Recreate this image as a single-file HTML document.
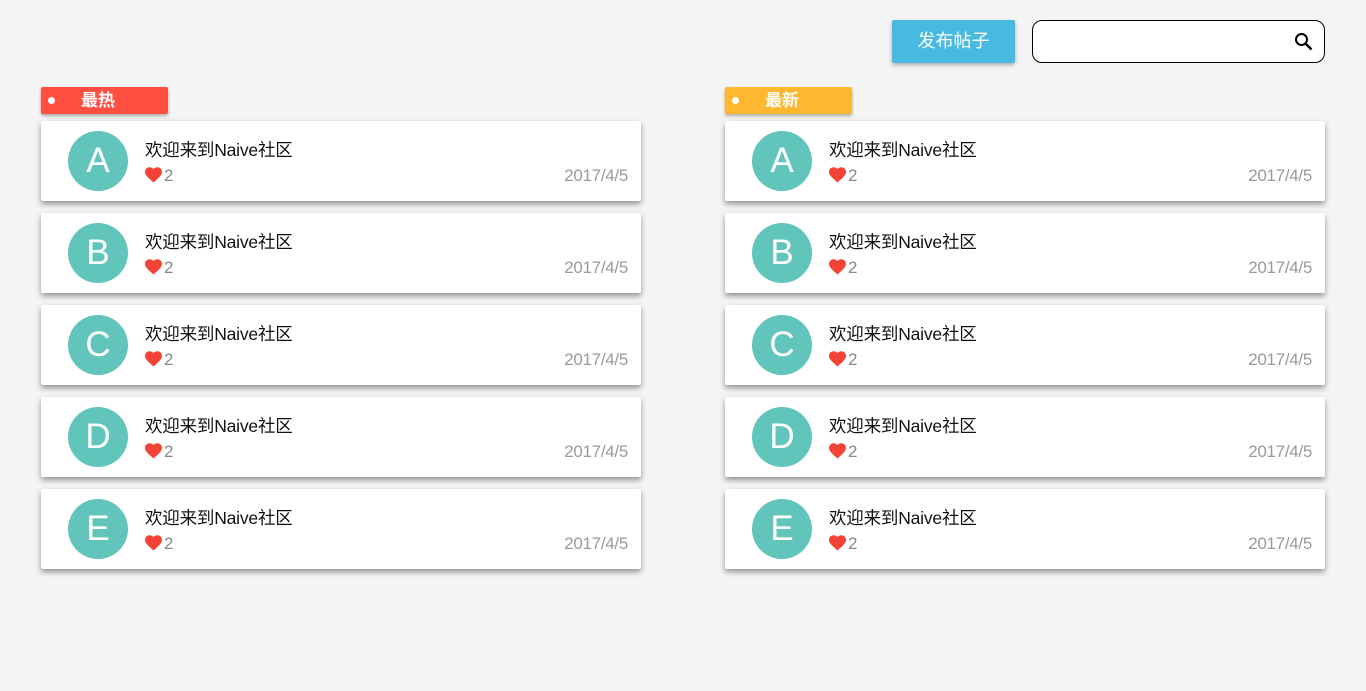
<!DOCTYPE html>
<html><head><meta charset="utf-8"><style>
*{margin:0;padding:0;box-sizing:border-box}
body{width:1366px;height:691px;background:#f4f4f4;font-family:"Liberation Sans","Noto Sans CJK SC",sans-serif;position:relative;overflow:hidden}
.btn{position:absolute;left:892px;top:20px;width:123px;height:43px;background:#48b9e1;color:#fff;font-size:18px;line-height:43px;text-align:center;border-radius:2px;box-shadow:0 2px 4px rgba(0,0,0,.3)}
.search{position:absolute;left:1032px;top:20px;width:293px;height:43px;background:#fff;border:1px solid #000;border-radius:10px}
.search svg{position:absolute;right:10px;top:11px}
.col{position:absolute;top:87px;width:600px}
.tag{width:127px;height:27px;color:#fff;font-weight:bold;font-size:17px;line-height:27px;position:relative;border-radius:2px;box-shadow:0 2px 3px rgba(0,0,0,.3);padding-left:40px}
.tag:before{content:"";position:absolute;left:7px;top:10px;width:7px;height:7px;border-radius:50%;background:#fff}
.card{position:absolute;left:0;width:600px;height:80px;background:#fff;border-radius:2px;box-shadow:0 3px 6px rgba(0,0,0,.4)}
.av{position:absolute;left:27px;top:10px;width:60px;height:60px;border-radius:50%;background:#62c5bb;color:#fff;font-size:35px;line-height:60px;text-align:center}
.t{position:absolute;left:104px;top:16px;font-size:17.5px;color:#111;letter-spacing:-0.2px}
.h{position:absolute;left:104px;top:46px;font-size:17px;color:#888;line-height:18px}
.h svg{vertical-align:-2px;margin-right:2px}
.d{position:absolute;right:13px;top:45px;font-size:17px;color:#999;line-height:20px;letter-spacing:-0.3px}
</style></head><body>
<div class="btn">发布帖子</div>
<div class="search"><svg width="20" height="20" viewBox="0 0 20 20"><circle cx="7.5" cy="7.5" r="5.5" fill="none" stroke="#000" stroke-width="2"/><path d="M11.5 11.5L17.5 17.5" stroke="#000" stroke-width="2.5"/></svg></div>
<div class="col" style="left:41px"><div class="tag" style="background:#ff4f40">最热</div></div>
<div class="col" style="left:725px"><div class="tag" style="background:#ffb730">最新</div></div>
<div id="c"></div>
<script>
var L=["A","B","C","D","E"],h="";
[41,725].forEach(function(x){L.forEach(function(l,i){
h+='<div class="card" style="left:'+x+'px;top:'+(121+i*92)+'px"><div class="av">'+l+'</div><div class="t">欢迎来到Naive社区</div><div class="h"><svg width="17" height="16" viewBox="0 0 24 22"><path d="M12 21.5L10.3 20C4.2 14.5 0 10.8 0 6.5 0 3 2.8 0 6.5 0 8.6 0 10.6 1 12 2.5 13.4 1 15.4 0 17.5 0 21.2 0 24 3 24 6.5c0 4.3-4.2 8-10.3 13.5z" fill="#f44336"/></svg>2</div><div class="d">2017/4/5</div></div>';});});
document.getElementById("c").innerHTML=h;
</script>
</body></html>
